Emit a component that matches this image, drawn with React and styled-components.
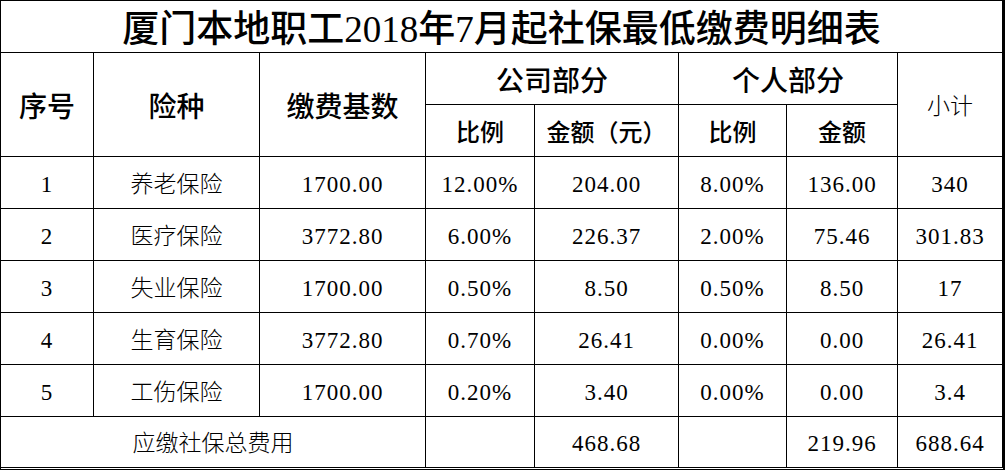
import React from 'react';
import styled, { createGlobalStyle } from 'styled-components';

const GlobalStyle = createGlobalStyle`
  html, body {
    margin: 0;
    padding: 0;
    background: #fff;
  }
  body {
    font-family: "Liberation Serif", "Noto Sans CJK SC", serif;
    color: #000;
  }
`;

const rows = [
  ['1', '养老保险', '1700.00', '12.00%', '204.00', '8.00%', '136.00', '340'],
  ['2', '医疗保险', '3772.80', '6.00%', '226.37', '2.00%', '75.46', '301.83'],
  ['3', '失业保险', '1700.00', '0.50%', '8.50', '0.50%', '8.50', '17'],
  ['4', '生育保险', '3772.80', '0.70%', '26.41', '0.00%', '0.00', '26.41'],
  ['5', '工伤保险', '1700.00', '0.20%', '3.40', '0.00%', '0.00', '3.4'],
];

export default function App() {
  return (
    <>
      <GlobalStyle />
      <Sheet>
        <Title>厦门本地职工2018年7月起社保最低缴费明细表</Title>

        <HeadCell $rows={2}>序号</HeadCell>
        <HeadCell $rows={2}>险种</HeadCell>
        <HeadCell $rows={2}>缴费基数</HeadCell>
        <HeadCell $span={2} $lift>公司部分</HeadCell>
        <HeadCell $span={2} $lift>个人部分</HeadCell>
        <Cell $rows={2}>小计</Cell>
        <SubHead>比例</SubHead>
        <SubHead>金额（元）</SubHead>
        <SubHead>比例</SubHead>
        <SubHead>金额</SubHead>

        {rows.map(row =>
          row.map((value, i) => (
            <Cell key={`${row[0]}-${i}`} $num={i !== 1}>
              {value}
            </Cell>
          )),
        )}

        <Cell $span={3} $last>应缴社保总费用</Cell>
        <Cell $last />
        <Cell $last $num>468.68</Cell>
        <Cell $last />
        <Cell $last $num>219.96</Cell>
        <Cell $last $num>688.64</Cell>
      </Sheet>
    </>
  );
}

const Sheet = styled.div`
  display: grid;
  grid-template-columns: 93px 166px 166px 109px 144px 108px 111px 105px;
  grid-auto-rows: 52px;
  width: 1005px;
  box-sizing: border-box;
  border-top: 1px solid #000;
  border-left: 1px solid #000;
  border-right: 2px solid #000;
  border-bottom: 2px solid #000;
`;

const Cell = styled.div`
  grid-column: span ${p => p.$span || 1};
  grid-row: span ${p => p.$rows || 1};
  display: flex;
  align-items: center;
  justify-content: center;
  box-sizing: border-box;
  height: ${p => (p.$last ? '51px' : 'auto')};
  padding-top: 3px;
  border-right: 1px solid #000;
  border-bottom: 1px solid #000;
  font-size: 23px;
  font-weight: 300;
  letter-spacing: ${p => (p.$num ? '1px' : '0')};
  white-space: nowrap;
  line-height: 1;
`;

const Title = styled(Cell)`
  grid-column: span 8;
  padding-top: 5px;
  font-size: 37px;
  font-weight: 500;
`;

const HeadCell = styled(Cell)`
  padding-top: ${p => (p.$lift ? '6px' : '7px')};
  font-size: 28px;
  font-weight: 500;
`;

const SubHead = styled(Cell)`
  padding-top: 4px;
  font-size: 24px;
  font-weight: 500;
`;
